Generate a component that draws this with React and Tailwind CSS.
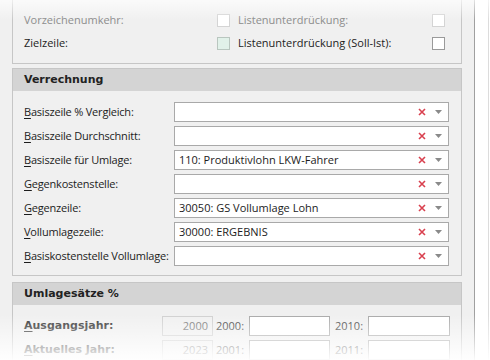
import React from 'react'

const font = { fontFamily: '"Open Sans", "Noto Sans", sans-serif' }

function Key({ text }) {
  return (
    <span>
      <span className="underline underline-offset-2">{text[0]}</span>
      {text.slice(1)}
    </span>
  )
}

function Combo({ value }) {
  return (
    <div className="flex h-[20px] w-[275px] items-center border border-[#a9a9a9] bg-white pl-[4px] pr-[6px]">
      <span className="flex-1 truncate text-[11px] text-[#1c1c1c]">{value}</span>
      <svg width="8" height="8" viewBox="0 0 8 8" className="mr-[9px]">
        <path d="M1 1 L7 7 M7 1 L1 7" stroke="#d9414f" strokeWidth="1.6" />
      </svg>
      <svg width="7" height="4" viewBox="0 0 7 4">
        <path d="M0 0 H7 L3.5 4 Z" fill="#8a8a8a" />
      </svg>
    </div>
  )
}

const rows = [
  ['Basiszeile % Vergleich:', ''],
  ['Basiszeile Durchschnitt:', ''],
  ['Basiszeile für Umlage:', '110: Produktivlohn LKW-Fahrer'],
  ['Gegenkostenstelle:', ''],
  ['Gegenzeile:', '30050: GS Vollumlage Lohn'],
  ['Vollumlagezeile:', '30000: ERGEBNIS'],
  ['Basiskostenstelle Vollumlage:', ''],
]

function Header({ title }) {
  return (
    <div
      className="flex h-[22px] items-center bg-[#d4d4d4] pl-[11px] text-[11px] font-bold text-[#222]"
      style={{ fontFamily: '"DejaVu Sans", sans-serif' }}
    >
      {title}
    </div>
  )
}

export default function App() {
  return (
    <div className="relative flex h-[360px] w-[490px] overflow-hidden bg-white" style={font}>
      <div className="w-[475px] shrink-0 border-r border-[#a0a0a0] bg-[#f0f0f0] pl-[12px]">
        {/* top panel */}
        <div className="-mt-[5px] w-[450px] border border-[#c6c6c6] pt-[14px] pb-[10px] pl-[11px]">
          <div className="grid grid-cols-[193px_21px_194px_13px] gap-y-[3px] text-[11px] whitespace-nowrap">
            <div className="flex h-[20px] items-center text-[#8c8c8c]">Vorzeichenumkehr:</div>
            <div className="flex items-center"><div className="h-[13px] w-[13px] border border-[#d4d4d4] bg-white" /></div>
            <div className="flex items-center text-[#8c8c8c]">Listenunterdrückung:</div>
            <div className="flex items-center"><div className="h-[13px] w-[13px] border border-[#d4d4d4] bg-white" /></div>
            <div className="flex h-[20px] items-center text-[#1c1c1c]">Zielzeile:</div>
            <div className="flex items-center"><div className="h-[13px] w-[13px] border border-[#b9c6bf] bg-[#e1f1e9]" /></div>
            <div className="flex items-center text-[#1c1c1c]">Listenunterdrückung (Soll-Ist):</div>
            <div className="flex items-center"><div className="h-[13px] w-[13px] border border-[#9a9a9a] bg-white" /></div>
          </div>
        </div>

        {/* Verrechnung */}
        <div className="mt-[4px] w-[450px] border border-[#c6c6c6]">
          <Header title="Verrechnung" />
          <div className="flex flex-col gap-[4px] pt-[11px] pb-[9px] pl-[11px]">
            {rows.map(([label, value]) => (
              <div key={label} className="flex h-[20px] items-center">
                <div className="w-[150px] whitespace-nowrap text-[11px] tracking-[-0.2px] text-[#1c1c1c]"><Key text={label} /></div>
                <Combo value={value} />
              </div>
            ))}
          </div>
        </div>

        {/* Umlagesätze */}
        <div className="mt-[6px] w-[450px] border border-[#c6c6c6]">
          <Header title="Umlagesätze %" />
          <div className="flex flex-col gap-[4px] pt-[11px] pl-[11px]">
            {[
              ['Ausgangsjahr:', '2000', '2000:', '2010:'],
              ['Aktuelles Jahr:', '2023', '2001:', '2011:'],
            ].map(([label, year, a, b]) => (
              <div key={label} className="flex h-[20px] items-center text-[11px] whitespace-nowrap">
                <div
                  className="w-[138px] text-[11px] font-bold text-[#333]"
                  style={{ fontFamily: '"DejaVu Sans", sans-serif' }}
                >
                  <Key text={label} />
                </div>
                <div className="flex h-[20px] w-[51px] items-center justify-end border border-[#d0d0d0] pr-[4px] text-[#777]">{year}</div>
                <div className="w-[36px] pl-[3px] text-[#444]">{a}</div>
                <div className="h-[20px] w-[81px] border border-[#a9a9a9] bg-white" />
                <div className="w-[38px] pl-[5px] text-[#444]">{b}</div>
                <div className="h-[20px] w-[82px] border border-[#a9a9a9] bg-white" />
              </div>
            ))}
          </div>
        </div>
      </div>
      <div className="w-[14px] shrink-0 border-r border-[#dcdcdc] bg-white" />

      {/* fade overlays */}
      <div className="pointer-events-none absolute inset-x-0 top-0 h-[20px] bg-gradient-to-b from-white/70 to-white/0" />
      <div className="pointer-events-none absolute inset-x-0 bottom-0 h-[46px] bg-gradient-to-b from-white/0 to-white/95" />
    </div>
  )
}
